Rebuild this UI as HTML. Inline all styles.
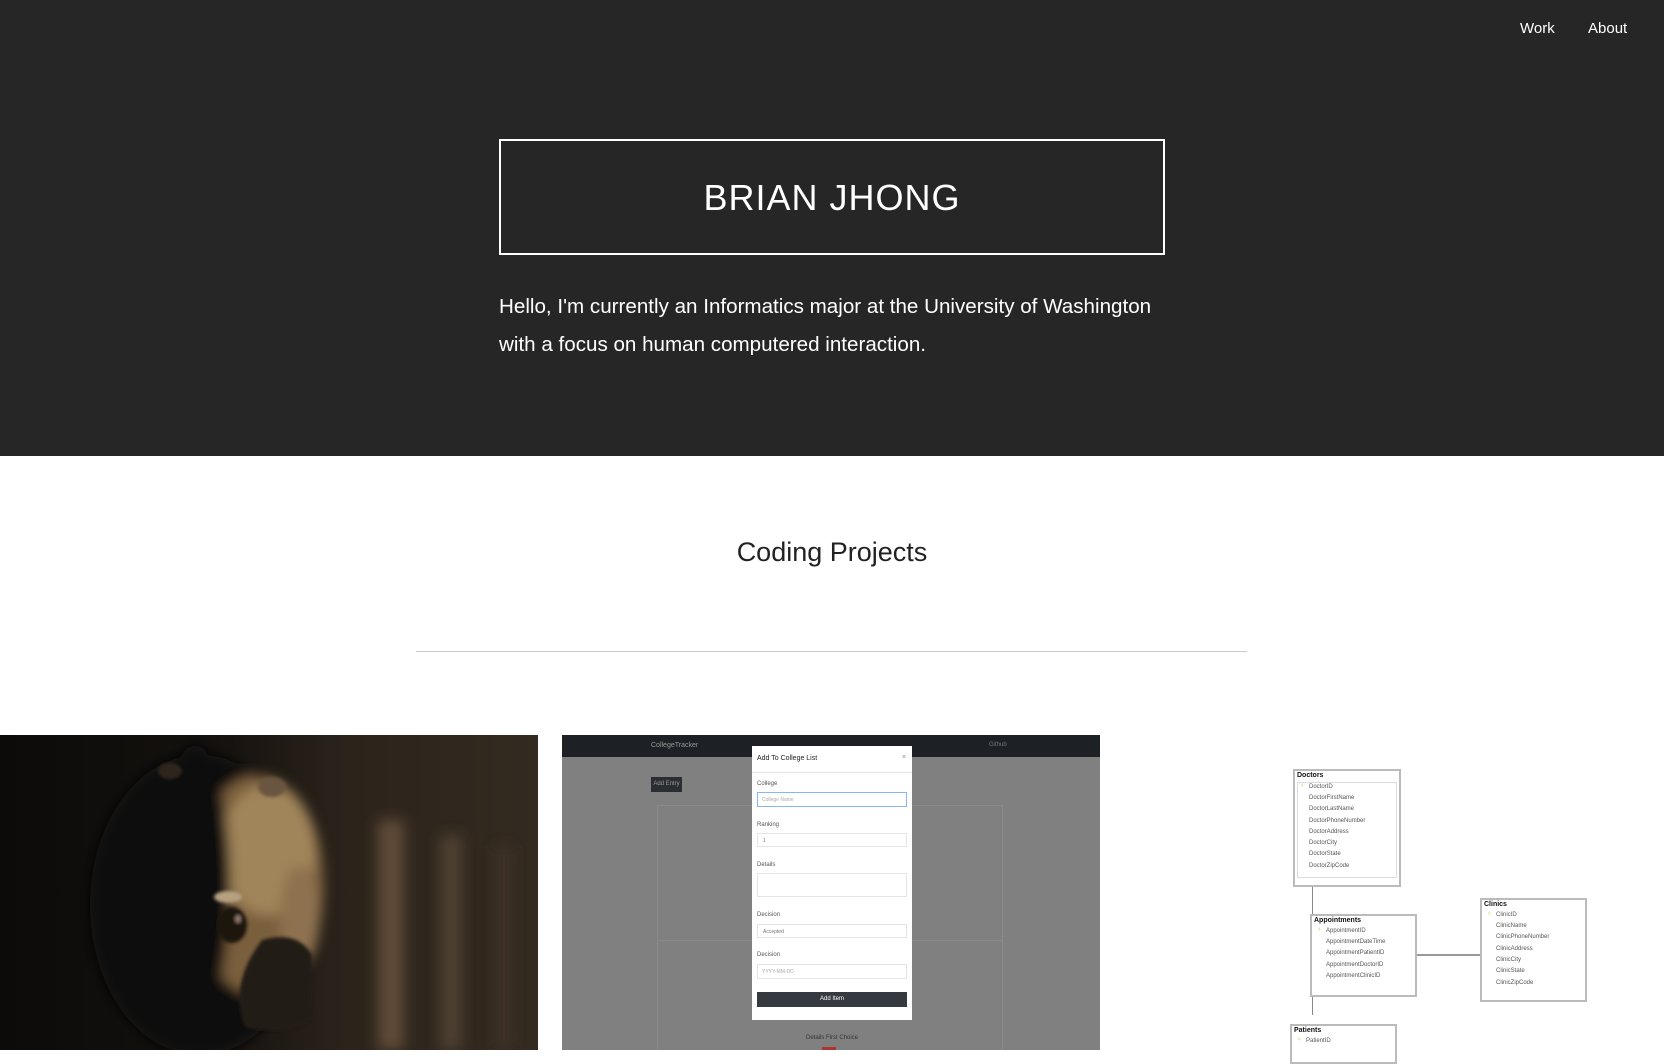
<!DOCTYPE html>
<html><head><meta charset="utf-8">
<style>
*{margin:0;padding:0;box-sizing:border-box}
html,body{width:1664px;height:1050px;overflow:hidden;background:#fff;font-family:"Liberation Sans",sans-serif}
.hero{position:absolute;left:0;top:0;width:1664px;height:456px;background:#262626;color:#fff}
.nav{position:absolute;top:20px;font-size:15px;color:#fff}
.box{position:absolute;left:499px;top:139px;width:666px;height:116px;border:2px solid #fff}
.box h1{position:absolute;left:0;right:0;top:37px;text-align:center;font-weight:normal;font-size:36px;line-height:40px;letter-spacing:1px}
.p{position:absolute;left:499px;top:288px;width:720px;font-size:20.6px;line-height:38px;color:#fff}
.h2{position:absolute;left:0;width:1664px;top:537px;text-align:center;font-size:27px;color:#222}
.hr{position:absolute;left:416px;top:651px;width:831px;height:1px;background:#ccc}
.abs{position:absolute}
.t{position:absolute;font-size:6px;color:#555}
</style></head><body>
<div class="hero">
  <div class="nav" style="left:1520px">Work</div>
  <div class="nav" style="left:1588px">About</div>
  <div class="box"><h1>BRIAN JHONG</h1></div>
  <div class="p">Hello, I'm currently an Informatics major at the University of Washington<br>with a focus on human computered interaction.</div>
</div>
<div class="h2">Coding Projects</div>
<div class="hr"></div>

<!-- pug -->
<svg class="abs" style="left:0;top:735px" width="538" height="315" viewBox="0 0 538 315">
<defs>
<linearGradient id="bg" x1="0" x2="1" y1="0" y2="0"><stop offset="0" stop-color="#0c0b0a"/><stop offset="0.4" stop-color="#14110e"/><stop offset="0.65" stop-color="#2c241b"/><stop offset="1" stop-color="#332a20"/></linearGradient>
<filter id="b1"><feGaussianBlur stdDeviation="7"/></filter>
<filter id="b2"><feGaussianBlur stdDeviation="6"/></filter>
<filter id="b3"><feGaussianBlur stdDeviation="1.5"/></filter>
</defs>
<rect width="538" height="315" fill="url(#bg)"/>
<g filter="url(#b1)">
<rect x="378" y="85" width="26" height="230" fill="#5e4c38"/>
<rect x="440" y="100" width="22" height="215" fill="#4e4030"/>
<rect x="495" y="110" width="18" height="205" fill="#3e3327"/>
</g>
<g filter="url(#b2)">
<ellipse cx="200" cy="170" rx="110" ry="150" fill="#100d0b"/>
<ellipse cx="258" cy="150" rx="66" ry="110" fill="#7a5e3c"/>
<ellipse cx="268" cy="115" rx="48" ry="65" fill="#a0845a"/>
<ellipse cx="300" cy="180" rx="20" ry="50" fill="#8e7250"/>
<ellipse cx="195" cy="150" rx="35" ry="140" fill="#100d0b"/>
</g>
<g filter="url(#b3)">
<ellipse cx="232" cy="190" rx="15" ry="18" fill="#1a1311"/>
<ellipse cx="238" cy="184" rx="3" ry="4" fill="#8a7868"/>
<path d="M262 205 Q298 195 312 220 L310 285 Q285 302 245 292 Q228 250 262 205Z" fill="#241c18"/>
<ellipse cx="228" cy="162" rx="14" ry="6" fill="#b5a080"/>
<ellipse cx="272" cy="52" rx="14" ry="10" fill="#6a5540"/>
<ellipse cx="170" cy="36" rx="12" ry="8" fill="#2e251d"/>
</g>
</svg>

<!-- college tracker screenshot -->
<div class="abs" style="left:562px;top:735px;width:538px;height:315px;background:#808080;overflow:hidden">
  <div class="abs" style="left:0;top:0;width:538px;height:22px;background:#1d2024"></div>
  <div class="abs" style="left:89px;top:7px;font-size:7px;color:#999">CollegeTracker</div>
  <div class="abs" style="left:427px;top:7px;font-size:6px;color:#777">Github</div>
  <div class="abs" style="left:89px;top:42px;width:31px;height:15px;background:#2a2d31;color:#999;font-size:6px;line-height:15px;text-align:center">Add Entry</div>
  <div class="abs" style="left:95px;top:70px;width:346px;height:250px;border:1px solid #8a8a8a"></div>
  <div class="abs" style="left:95px;top:205px;width:346px;height:1px;background:#8a8a8a"></div>
  <div class="abs" style="left:244px;top:300px;font-size:6px;color:#333">Details First Choice</div>
  <div class="abs" style="left:260px;top:312px;width:14px;height:4px;background:#a33"></div>
  <div class="abs" style="left:190px;top:11px;width:160px;height:274px;background:#fff">
    <div class="abs" style="left:5px;top:9px;font-size:7px;color:#222">Add To College List</div>
    <div class="abs" style="left:150px;top:8px;font-size:7px;color:#888">×</div>
    <div class="abs" style="left:0;top:26px;width:160px;height:1px;background:#e6e6e6"></div>
    <div class="abs t" style="left:5px;top:35px">College</div>
    <div class="abs" style="left:5px;top:46px;width:150px;height:15px;border:1px solid #8ab4f8;font-size:5px;color:#aaa;padding:4px 4px">College Name</div>
    <div class="abs t" style="left:5px;top:76px">Ranking</div>
    <div class="abs" style="left:5px;top:87px;width:150px;height:14px;border:1px solid #e4e4e4;font-size:5px;color:#777;padding:4px 5px">1</div>
    <div class="abs t" style="left:5px;top:116px">Details</div>
    <div class="abs" style="left:5px;top:127px;width:150px;height:24px;border:1px solid #e4e4e4"></div>
    <div class="abs t" style="left:5px;top:166px">Decision</div>
    <div class="abs" style="left:5px;top:178px;width:150px;height:14px;border:1px solid #e4e4e4;font-size:5px;color:#777;padding:4px 5px">Accepted</div>
    <div class="abs t" style="left:5px;top:206px">Decision</div>
    <div class="abs" style="left:5px;top:218px;width:150px;height:15px;border:1px solid #e4e4e4;font-size:5px;color:#aaa;padding:4px 4px">YYYY-MM-DD</div>
    <div class="abs" style="left:5px;top:246px;width:150px;height:15px;background:#343a40;color:#fff;font-size:6px;line-height:15px;text-align:center">Add Item</div>
  </div>
</div>

<!-- ER diagram -->
<div class="abs" style="left:1293px;top:769px;width:108px;height:118px;border:2px solid #bbb;background:#fff">
  <div class="abs" style="left:2px;top:1px;font-size:7px;font-weight:bold;color:#111">Doctors</div>
  <div class="abs" style="left:2px;top:11px;width:100px;height:96px;border:1px solid #ddd"></div>
  <div class="t" style="left:14px;top:13px">DoctorID</div><div class="t" style="left:5px;top:12px;color:#cc0">♀</div>
  <div class="t" style="left:14px;top:24px">DoctorFirstName</div>
  <div class="t" style="left:14px;top:35px">DoctorLastName</div>
  <div class="t" style="left:14px;top:47px">DoctorPhoneNumber</div>
  <div class="t" style="left:14px;top:58px">DoctorAddress</div>
  <div class="t" style="left:14px;top:69px">DoctorCity</div>
  <div class="t" style="left:14px;top:80px">DoctorState</div>
  <div class="t" style="left:14px;top:92px">DoctorZipCode</div>
</div>
<div class="abs" style="left:1312px;top:887px;width:1px;height:128px;background:#888"></div>
<div class="abs" style="left:1310px;top:914px;width:107px;height:83px;border:2px solid #bbb;background:#fff">
  <div class="abs" style="left:2px;top:1px;font-size:7px;font-weight:bold;color:#111">Appointments</div>
  <div class="t" style="left:14px;top:12px">AppointmentID</div><div class="t" style="left:5px;top:11px;color:#cc0">♀</div>
  <div class="t" style="left:14px;top:23px">AppointmentDateTime</div>
  <div class="t" style="left:14px;top:34px">AppointmentPatientID</div>
  <div class="t" style="left:14px;top:46px">AppointmentDoctorID</div>
  <div class="t" style="left:14px;top:57px">AppointmentClinicID</div>
</div>
<div class="abs" style="left:1417px;top:954px;width:63px;height:2px;background:#999"></div>
<div class="abs" style="left:1480px;top:898px;width:107px;height:104px;border:2px solid #bbb;background:#fff">
  <div class="abs" style="left:2px;top:1px;font-size:7px;font-weight:bold;color:#111">Clinics</div>
  <div class="t" style="left:14px;top:12px">ClinicID</div><div class="t" style="left:5px;top:11px;color:#cc0">♀</div>
  <div class="t" style="left:14px;top:23px">ClinicName</div>
  <div class="t" style="left:14px;top:34px">ClinicPhoneNumber</div>
  <div class="t" style="left:14px;top:46px">ClinicAddress</div>
  <div class="t" style="left:14px;top:57px">ClinicCity</div>
  <div class="t" style="left:14px;top:68px">ClinicState</div>
  <div class="t" style="left:14px;top:80px">ClinicZipCode</div>
</div>
<div class="abs" style="left:1290px;top:1024px;width:107px;height:40px;border:2px solid #bbb;background:#fff">
  <div class="abs" style="left:2px;top:1px;font-size:7px;font-weight:bold;color:#111">Patients</div>
  <div class="t" style="left:14px;top:12px">PatientID</div><div class="t" style="left:5px;top:11px;color:#cc0">♀</div>
</div>
</body></html>
